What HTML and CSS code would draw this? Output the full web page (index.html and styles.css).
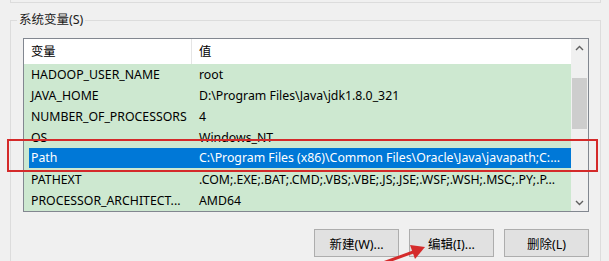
FILE: index.html
```html
<!DOCTYPE html>
<html lang="zh-CN">
<head>
  <meta charset="UTF-8" />
  <meta name="viewport" content="width=device-width, initial-scale=1" />
  <title>环境变量</title>
  <link rel="stylesheet" href="styles.css">
</head>
<body>

  <div class="upper-group"></div>

  <fieldset class="group">
    <legend>系统变量(S)</legend>

    <div class="listbox">
      <div class="list">
        <div class="list-header">
          <div class="col-name">变量</div>
          <div class="col-value">值</div>
        </div>
        <div class="row"><div class="col-name">HADOOP_USER_NAME</div><div class="col-value">root</div></div>
        <div class="row"><div class="col-name">JAVA_HOME</div><div class="col-value">D:\Program Files\Java\jdk1.8.0_321</div></div>
        <div class="row"><div class="col-name">NUMBER_OF_PROCESSORS</div><div class="col-value">4</div></div>
        <div class="row"><div class="col-name">OS</div><div class="col-value">Windows_NT</div></div>
        <div class="row selected"><div class="col-name">Path</div><div class="col-value">C:\Program Files (x86)\Common Files\Oracle\Java\javapath;C:...</div></div>
        <div class="row"><div class="col-name">PATHEXT</div><div class="col-value">.COM;.EXE;.BAT;.CMD;.VBS;.VBE;.JS;.JSE;.WSF;.WSH;.MSC;.PY;.P...</div></div>
        <div class="row"><div class="col-name">PROCESSOR_ARCHITECT...</div><div class="col-value">AMD64</div></div>
      </div>
      <div class="scrollbar">
        <div class="scroll-btn">
          <svg width="9" height="6" viewBox="0 0 9 6"><polyline points="1,5 4.5,1.5 8,5" fill="none" stroke="#606060" stroke-width="1.4"/></svg>
        </div>
        <div class="scroll-track"><div class="scroll-thumb"></div></div>
        <div class="scroll-btn">
          <svg width="9" height="6" viewBox="0 0 9 6"><polyline points="1,1 4.5,4.5 8,1" fill="none" stroke="#606060" stroke-width="1.4"/></svg>
        </div>
      </div>
    </div>

    <div class="buttons">
      <button type="button">新建(W)...</button>
      <button type="button">编辑(I)...</button>
      <button type="button">删除(L)</button>
    </div>
  </fieldset>

  <!-- annotations drawn on top of the screenshot -->
  <div class="mark-box"></div>
  <svg class="mark-arrow" width="70" height="30" viewBox="0 0 70 30">
    <line x1="3" y1="31" x2="36" y2="19" stroke="#d52b2b" stroke-width="3"/>
    <polygon points="45,15 30,13 35,27" fill="#d52b2b"/>
  </svg>

</body>
</html>
```

FILE: styles.css
```css
html, body {
  overflow: hidden;
}
body {
  margin: 0;
  background: #f0f0f0;
  font-family: "Noto Sans", "Noto Sans CJK SC", sans-serif;
  font-size: 12.3px;
  color: #000;
}
.upper-group {
  height: 2px;
  margin: 0 8px 0 10px;
  border: 1px solid #dcdcdc;
  border-top: none;
}
.group {
  margin: 9px 8px 0 10px;
  padding: 10px 11px 30px 12px;
  border: 1px solid #dcdcdc;
  min-width: 0;
}
.group legend {
  padding: 0 2px;
  margin-left: -6px;
  line-height: 16px;
  font-size: 12.5px;
  color: #1a1a1a;
}
.listbox {
  display: flex;
  border: 1px solid #828790;
  background: #fff;
}
.list {
  flex: 1;
  min-width: 0;
}
.list-header {
  display: flex;
  height: 25px;
  line-height: 26px;
  background: #fff;
}
.list-header .col-name {
  border-right: 1px solid #e5e5e5;
}
.col-name {
  width: 168px;
  padding-left: 7px;
  box-sizing: border-box;
  white-space: nowrap;
  overflow: hidden;
  flex-shrink: 0;
}
.col-value {
  flex: 1;
  padding-left: 7px;
  white-space: nowrap;
  overflow: hidden;
}
.row {
  display: flex;
  height: 21px;
  line-height: 21px;
  background: #cde8d0;
}
.row.selected {
  box-sizing: border-box;
  border-left: 5px solid #cde8d0;
  border-bottom: 1px solid #cde8d0;
  line-height: 20px;
  background: #0078d7;
  color: #fff;
}
.row.selected .col-name {
  width: 163px;
  padding-left: 2px;
}
.scrollbar {
  width: 17px;
  display: flex;
  flex-direction: column;
  background: #f0f0f0;
}
.scroll-btn {
  height: 17px;
  display: flex;
  align-items: center;
  justify-content: center;
}
.scroll-track {
  flex: 1;
  padding-top: 22px;
}
.scroll-thumb {
  height: 51px;
  margin: 0 1px;
  background: #cdcdcd;
}
.buttons {
  display: flex;
  justify-content: flex-end;
  gap: 10px;
  margin-top: 17px;
}
.buttons button {
  width: 85px;
  height: 28px;
  padding: 0;
  border: 1px solid #adadad;
  background: #e1e1e1;
  font-family: "Noto Sans", "Noto Sans CJK SC", sans-serif;
  font-size: 12.5px;
  color: #000;
}
.mark-box {
  position: absolute;
  left: 7px;
  top: 139px;
  width: 587px;
  height: 29px;
  border: 2px solid #d42a2a;
}
.mark-arrow {
  position: absolute;
  left: 380px;
  top: 232px;
}
```
